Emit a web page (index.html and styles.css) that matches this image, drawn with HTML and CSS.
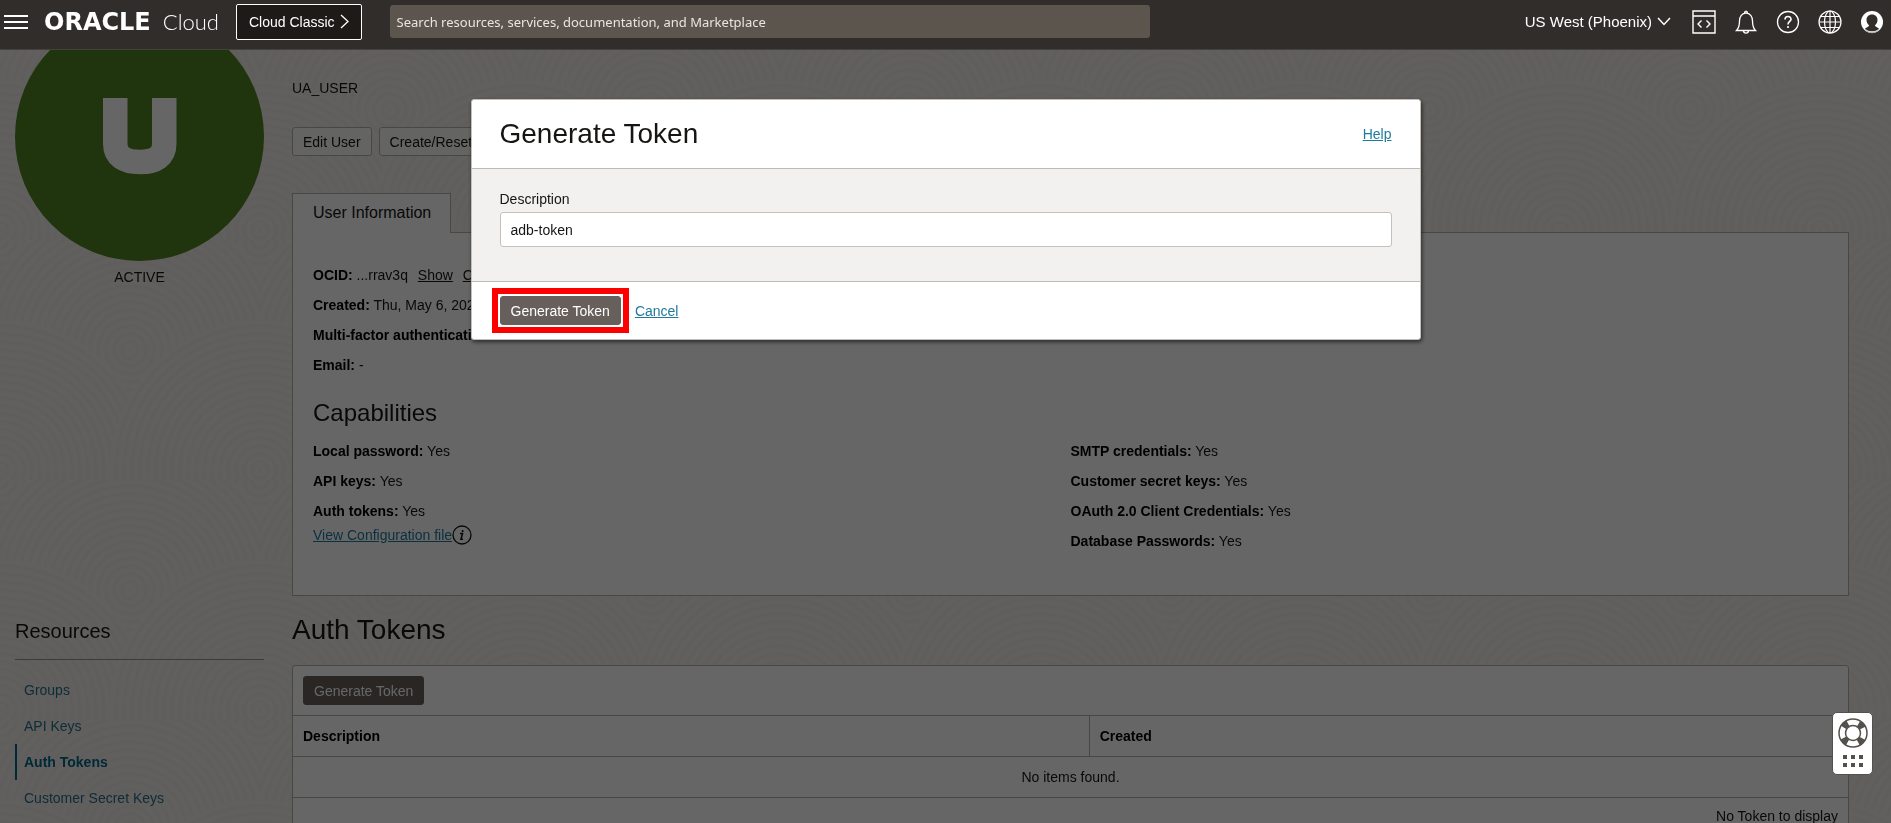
FILE: index.html
```html
<!DOCTYPE html>
<html lang="en">
<head>
<meta charset="utf-8">
<title>User Details - Auth Tokens</title>
<link rel="stylesheet" href="styles.css">
</head>
<body>
<header class="topbar">
  <button class="icon-btn menu-btn" aria-label="Menu">
    <svg width="24" height="16" viewBox="0 0 24 16" stroke="#fff" stroke-width="2"><path d="M0 2h24M0 8h24M0 14h24"/></svg>
  </button>
  <a class="brand" href="#"><span class="brand-name">ORACLE</span><span class="brand-product">Cloud</span></a>
  <button class="classic-btn">Cloud Classic
    <svg width="9" height="15" viewBox="0 0 9 15" fill="none" stroke="#fff" stroke-width="1.3"><path d="M1 1l7 6.500-7 6.500"/></svg>
  </button>
  <input class="search" type="text" aria-label="Search" placeholder="Search resources, services, documentation, and Marketplace">
  <div class="top-actions">
    <button class="region">US West (Phoenix)
      <svg width="14" height="9" viewBox="0 0 14 9" fill="none" stroke="#fff" stroke-width="1.500"><path d="M1 1l6 6.500L13 1"/></svg>
    </button>
    <button class="icon-btn" aria-label="Developer tools">
      <svg width="24" height="24" viewBox="0 0 24 24" fill="none" stroke="#fff" stroke-width="1.400"><path d="M1 1h22v22H1zM1 6h22M9.500 10.500L6 14l3.500 3.500M14.500 10.500L18 14l-3.500 3.500"/></svg>
    </button>
    <button class="icon-btn" aria-label="Announcements">
      <svg width="24" height="24" viewBox="0 0 24 24" fill="none" stroke="#fff" stroke-width="1.300"><path d="M2.500 20.500h19C19 18 18.500 16 18.500 11c0-4.500-2.500-8-6.500-8s-6.500 3.500-6.500 8c0 5-.5 7-3 9.500zM10.500 3c0-2.600 3-2.600 3 0M9.500 20.500c0 3.500 5 3.500 5 0"/></svg>
    </button>
    <button class="icon-btn" aria-label="Help">
      <svg width="24" height="24" viewBox="0 0 24 24" fill="none" stroke="#fff" stroke-width="1.300"><circle cx="12" cy="12" r="10.500"/><path stroke-width="1.600" d="M9 9.500c0-4 6-4 6-.3 0 2.300-3 2.300-3 5.300M12 16v2"/></svg>
    </button>
    <button class="icon-btn" aria-label="Language">
      <svg width="24" height="24" viewBox="0 0 24 24" fill="none" stroke="#fff" stroke-width="1.200"><circle cx="12" cy="12" r="11"/><ellipse cx="12" cy="12" rx="5.500" ry="11"/><path d="M12 1v22M1 12h22M3 6.500h18M3 17.500h18"/></svg>
    </button>
    <button class="icon-btn" aria-label="Profile">
      <svg width="24" height="24" viewBox="0 0 24 24"><circle cx="12" cy="12" r="11" fill="#fff"/><path fill="#312d2a" d="M12 4.500c-3.400 0-5.500 2.400-5.500 5.500 0 2.200 1 4.200 2.600 5.200-.2 1.600-2.600 2-4.100 3.300 3.500 3.800 10.500 3.800 14 0-1.500-1.300-3.900-1.700-4.100-3.300 1.600-1 2.600-3 2.600-5.200 0-3.100-2.100-5.500-5.500-5.500z"/><path fill="none" stroke="#aaa" d="M5 19c3.500 5 10.500 5 14 0"/></svg>
    </button>
  </div>
</header>

<svg class="backdrop" aria-hidden="true">
  <defs>
    <radialGradient id="rings" gradientUnits="userSpaceOnUse" cx="0" cy="0" r="8" spreadMethod="repeat">
      <stop offset="0" stop-color="#eeebe6"/><stop offset=".5" stop-color="#f3f1ed"/><stop offset="1" stop-color="#eeebe6"/>
    </radialGradient>
    <circle id="disc" r="150" fill="url(#rings)"/>
    <pattern id="waves" width="260" height="240" patternUnits="userSpaceOnUse">
      <use href="#disc" x="0" y="0"/><use href="#disc" x="260" y="0"/>
      <use href="#disc" x="130" y="110"/>
      <use href="#disc" x="0" y="230"/><use href="#disc" x="260" y="230"/>
    </pattern>
  </defs>
  <rect width="100%" height="100%" fill="url(#waves)"/>
</svg>

<div class="page">
  <aside class="sidebar">
    <div class="avatar">
      <svg width="74" height="78" viewBox="0 0 74 78" fill="none" stroke="#fff" stroke-width="24.500"><path d="M12.250 0v46c0 12 9 18 24.750 18s24.250-6 24.250-18V0"/></svg>
    </div>
    <p class="status">ACTIVE</p>
    <nav class="resources" aria-labelledby="res-title">
      <h2 class="resources-title" id="res-title">Resources</h2>
      <a class="res-link" href="#">Groups</a>
      <a class="res-link" href="#">API Keys</a>
      <a class="res-link res-link-active" href="#">Auth Tokens</a>
      <a class="res-link" href="#">Customer Secret Keys</a>
    </nav>
  </aside>

  <main class="main">
    <p class="username">UA_USER</p>
    <div class="actions">
      <button class="btn">Edit User</button>
      <button class="btn">Create/Reset Password</button>
    </div>
    <div class="tabs"><button class="tab">User Information</button></div>
    <section class="panel">
      <div class="facts">
        <p><b>OCID:</b> ...rrav3q <a class="mini-link" href="#">Show</a> <a class="mini-link" href="#">Copy</a></p>
        <p><b>Created:</b> Thu, May 6, 2021</p>
        <p><b>Multi-factor authentication:</b></p>
        <p><b>Email:</b> -</p>
      </div>
      <h2 class="cap-title">Capabilities</h2>
      <div class="caps">
        <div>
          <div class="facts">
            <p><b>Local password:</b> Yes</p>
            <p><b>API keys:</b> Yes</p>
            <p><b>Auth tokens:</b> Yes</p>
          </div>
          <div class="config">
            <a class="link" href="#">View Configuration file</a>
            <svg width="20" height="20" viewBox="0 0 20 20" fill="none" stroke="#161513" stroke-width="1.300"><circle cx="10" cy="10" r="9"/><path stroke-width="1.600" d="M8 8.500h2.500L9 14.200h2M10.600 5v2"/></svg>
          </div>
        </div>
        <div class="facts">
          <p><b>SMTP credentials:</b> Yes</p>
          <p><b>Customer secret keys:</b> Yes</p>
          <p><b>OAuth 2.0 Client Credentials:</b> Yes</p>
          <p><b>Database Passwords:</b> Yes</p>
        </div>
      </div>
    </section>

    <h1 class="section-title">Auth Tokens</h1>
    <section class="tokens">
      <div class="toolbar"><button class="btn btn-primary">Generate Token</button></div>
      <table class="table">
        <thead><tr><th class="col-desc">Description</th><th>Created</th></tr></thead>
        <tbody><tr><td colspan="2">No items found.</td></tr></tbody>
      </table>
      <p class="table-foot">No Token to display</p>
    </section>
  </main>
</div>

<div class="overlay">
  <form class="modal" role="dialog" aria-labelledby="dlg-title">
    <div class="modal-head">
      <h1 class="modal-title" id="dlg-title">Generate Token</h1>
      <a class="link" href="#">Help</a>
    </div>
    <div class="modal-body">
      <label class="label" for="desc">Description</label>
      <input class="field" id="desc" type="text" value="adb-token">
    </div>
    <div class="modal-foot">
      <span class="highlight"><button class="btn btn-primary" type="button">Generate Token</button></span>
      <a class="link" href="#">Cancel</a>
    </div>
  </form>
</div>

<button class="support" aria-label="Support">
  <svg width="30" height="30" viewBox="0 0 30 30" fill="none" stroke="#54504c">
    <circle cx="15" cy="15" r="11" stroke-width="7" stroke-dasharray="6 11.279" stroke-dashoffset="-5.640"/>
    <circle cx="15" cy="15" r="14" stroke-width="1.500"/><circle cx="15" cy="15" r="7.500" stroke-width="1.500"/>
  </svg>
  <svg width="20" height="12" viewBox="0 0 20 12" fill="#54504c"><path d="M0 0h4v4H0zM8 0h4v4H8zM16 0h4v4h-4zM0 8h4v4H0zM8 8h4v4H8zM16 8h4v4h-4z"/></svg>
</button>
</body>
</html>
```
FILE: styles.css
```css
* { box-sizing: border-box; }
body {
  margin: 0;
  height: 100vh;
  overflow: hidden;
  background: #efede8;
  color: #161513;
  font: 14px/20px "Liberation Sans", Arial, sans-serif;
}
p, h1, h2 { margin: 0; font-weight: 400; }
button, input { font: inherit; }
svg { display: block; flex: none; }
b { color: #000; }

.topbar {
  position: fixed;
  inset: 0 0 auto;
  z-index: 20;
  display: flex;
  align-items: center;
  height: 50px;
  padding: 0 7px 6px 4px;
  background: #312d2a;
  border-bottom: 1px solid #45403c;
  color: #fff;
}
.icon-btn { padding: 0; border: 0; background: none; }
.brand {
  display: flex;
  align-items: center;
  gap: 12px;
  width: 176px;
  margin: 0 16px;
  color: #fff;
  text-decoration: none;
  white-space: nowrap;
}
.brand-name { font: bold 24px/24px "DejaVu Sans", sans-serif; }
.brand-product { font: 300 22px/24px Lato, sans-serif; }
.classic-btn {
  display: flex;
  align-items: center;
  gap: 5px;
  height: 36px;
  padding: 0 12px;
  border: 1px solid #fff;
  border-radius: 2px;
  background: #1e1a17;
  color: #fff;
  white-space: nowrap;
}
.search {
  width: 760px;
  height: 33px;
  margin-left: 28px;
  padding: 0 7px;
  border: 0;
  border-radius: 3px;
  background: #5b554e;
  color: #fff;
  font: 13px/20px "Noto Sans", sans-serif;
}
.search::placeholder { color: #e8e5e1; opacity: 1; }
.top-actions { display: flex; align-items: center; gap: 18px; margin-left: auto; }
.region {
  display: flex;
  align-items: center;
  gap: 5px;
  margin-right: 3px;
  padding: 0;
  border: 0;
  background: none;
  color: #fff;
  font-size: 15px;
  white-space: nowrap;
}

.backdrop { position: fixed; inset: 0; z-index: -1; width: 100%; height: 100%; }

.page { display: flex; gap: 28px; padding: 12px 42px 0 15px; }
.sidebar { flex: none; width: 249px; }
.avatar {
  display: flex;
  align-items: center;
  justify-content: center;
  aspect-ratio: 1;
  border-radius: 50%;
  background: #508223;
}
.status { margin-top: 6px; text-align: center; }
.resources { display: flex; flex-direction: column; margin-top: 332px; }
.resources-title {
  margin-bottom: 12px;
  padding-bottom: 16px;
  border-bottom: 1px solid #9a958e;
  font-size: 20px;
  line-height: 24px;
}
.res-link {
  padding: 8px 7px;
  border-left: 2px solid transparent;
  color: #27708c;
  text-decoration: none;
}
.res-link-active { border-color: #00688c; color: #00688c; font-weight: 700; }

.main { flex: 1; min-width: 0; padding-top: 66px; }
.actions { display: flex; gap: 7px; margin: 29px 0 37px; }
.btn {
  height: 29px;
  padding: 0 10px;
  border: 1px solid #b5b1ab;
  border-radius: 3px;
  background: #fbf9f8;
  color: #161513;
  white-space: nowrap;
}
.btn-primary { border-color: #665f5b; background: #665f5b; color: #fff; }
.tab {
  position: relative;
  height: 40px;
  padding: 0 19px 2px 20px;
  border: 1px solid #b5b1ab;
  border-bottom: 0;
  background: #fff;
  color: #161513;
  font-size: 16px;
}
.tabs { display: flex; }
.panel {
  margin-top: -1px;
  padding: 32px 20px 44px;
  border: 1px solid #b5b1ab;
  background: #fff;
}
.facts { display: grid; gap: 10px; align-content: start; }
.mini-link { margin-left: 6px; color: #161513; }
.cap-title { margin: 24px 0 14px; font-size: 24px; line-height: 28px; }
.caps { display: grid; grid-template-columns: 1fr 1fr; }
.config { display: flex; align-items: center; margin-top: 4px; }
.link { color: #1f7a9c; }

.section-title { margin: 17px 0 18px; font-size: 28px; line-height: 34px; }
.tokens { border: 1px solid #b5b1ab; border-radius: 3px 3px 0 0; background: #fff; }
.toolbar { padding: 10px; }
.table { width: 100%; border-collapse: collapse; table-layout: fixed; }
.table th, .table td { height: 41px; padding: 0 10px; border-block: 1px solid #b5b1ab; }
.table th { text-align: left; color: #000; }
.table td { text-align: center; }
.table .col-desc { width: 51.2%; border-right: 1px solid #b5b1ab; }
.table-foot { padding: 8px 10px; text-align: right; }

.overlay {
  position: fixed;
  inset: 0;
  z-index: 10;
  padding-top: 99px;
  background: rgba(0, 0, 0, .6);
}
.modal {
  width: 950px;
  max-width: 100%;
  margin: 0 auto;
  border: 1px solid #c4bfb9;
  border-radius: 3px;
  background: #fff;
  box-shadow: 1px 2px 4px rgba(0, 0, 0, .6);
}
.modal-head { display: flex; align-items: center; justify-content: space-between; padding: 17px 28px; }
.modal-title { font-size: 28px; line-height: 34px; }
.modal-body {
  display: grid;
  gap: 3px;
  padding: 20px 28px 34px;
  border-block: 1px solid #c0bab4;
  background: #f3f1f0;
}
.field {
  width: 100%;
  height: 35px;
  padding: 0 10px;
  border: 1px solid #c4c0bc;
  border-radius: 3px;
  background: #fff;
  color: #161513;
}
.modal-foot { display: flex; align-items: center; gap: 6px; padding: 6px 20px; }
.highlight { display: flex; padding: 2px; border: 6px solid #f00; }

.support {
  position: fixed;
  right: 18px;
  bottom: 48px;
  z-index: 30;
  display: flex;
  flex-direction: column;
  align-items: center;
  gap: 7px;
  width: 41px;
  padding: 5px 0 7px;
  border: 1px solid #54504c;
  border-radius: 5px;
  background: #fff;
}
```
